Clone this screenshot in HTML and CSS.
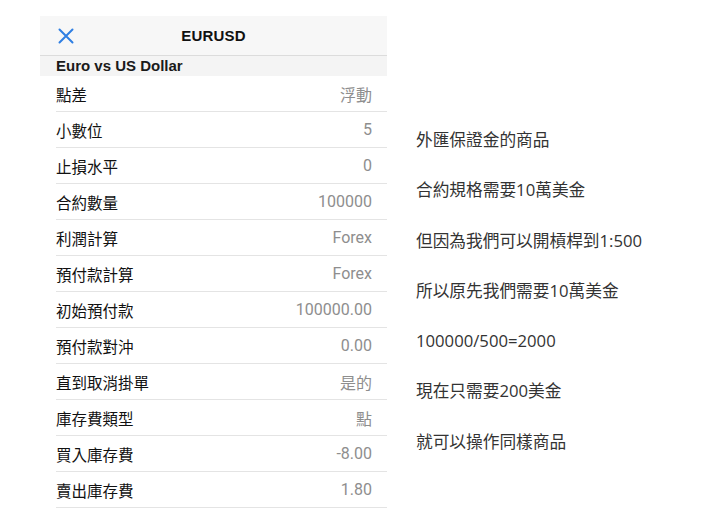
FILE: index.html
```html
<!DOCTYPE html>
<html lang="zh-Hant">
<head>
  <meta charset="UTF-8">
  <meta name="viewport" content="width=device-width, initial-scale=1.0">
  <title>EURUSD</title>
  <link rel="stylesheet" href="styles.css">
</head>
<body>
  <div class="page">
    <div class="phone">
      <div class="topbar">
        <svg class="close" width="16" height="16" viewBox="0 0 16 16">
          <path d="M1.5 1.5 L14.5 14.5 M14.5 1.5 L1.5 14.5" stroke="#2f7fe3" stroke-width="2" stroke-linecap="round" fill="none"/>
        </svg>
        <div class="title">EURUSD</div>
      </div>
      <div class="section">Euro vs US Dollar</div>
      <ul class="specs">
        <li><span>點差</span><span class="val">浮動</span></li>
        <li><span>小數位</span><span class="val">5</span></li>
        <li><span>止損水平</span><span class="val">0</span></li>
        <li><span>合約數量</span><span class="val">100000</span></li>
        <li><span>利潤計算</span><span class="val">Forex</span></li>
        <li><span>預付款計算</span><span class="val">Forex</span></li>
        <li><span>初始預付款</span><span class="val">100000.00</span></li>
        <li><span>預付款對沖</span><span class="val">0.00</span></li>
        <li><span>直到取消掛單</span><span class="val">是的</span></li>
        <li><span>庫存費類型</span><span class="val">點</span></li>
        <li><span>買入庫存費</span><span class="val">-8.00</span></li>
        <li><span>賣出庫存費</span><span class="val">1.80</span></li>
      </ul>
    </div>

    <div class="notes">
      <p>外匯保證金的商品</p>
      <p>合約規格需要10萬美金</p>
      <p>但因為我們可以開槓桿到1:500</p>
      <p>所以原先我們需要10萬美金</p>
      <p>100000/500=2000</p>
      <p>現在只需要200美金</p>
      <p>就可以操作同樣商品</p>
    </div>
  </div>
</body>
</html>
```

FILE: styles.css
```css
* { box-sizing: border-box; }
body { margin: 0; background: #fff; font-family: "Liberation Sans", "Noto Sans CJK TC", sans-serif; color: #111; }
.page { display: flex; align-items: flex-start; padding: 16px 0 0 40px; }

.phone { width: 347px; }
.topbar { position: relative; height: 40px; background: #f7f7f7; border-bottom: 1px solid #dcdcdc; display: flex; align-items: center; justify-content: center; }
.topbar .close { position: absolute; left: 18px; top: 12px; }
.topbar .title { font-size: 15px; font-weight: bold; letter-spacing: 0.2px; }
.section { height: 20px; background: #f4f4f4; padding-left: 16px; font-size: 15px; font-weight: bold; line-height: 20px; color: #1a1a1a; }

.specs { list-style: none; margin: 0; padding: 0 0 0 16px; }
.specs li { height: 36px; display: flex; justify-content: space-between; align-items: center; padding-right: 15px; border-bottom: 1px solid #e4e4e4; font-size: 15.5px; }
.specs .val { color: #8e8e8e; font-family: Roboto, "Noto Sans CJK TC", sans-serif; font-size: 16px; }

.notes { margin-left: 29px; padding-top: 112px; font-family: "Open Sans", "Noto Sans CJK TC", sans-serif; font-size: 16.7px; color: #333; }
.notes p { margin: 0; height: 50.3px; line-height: 24px; }
```
